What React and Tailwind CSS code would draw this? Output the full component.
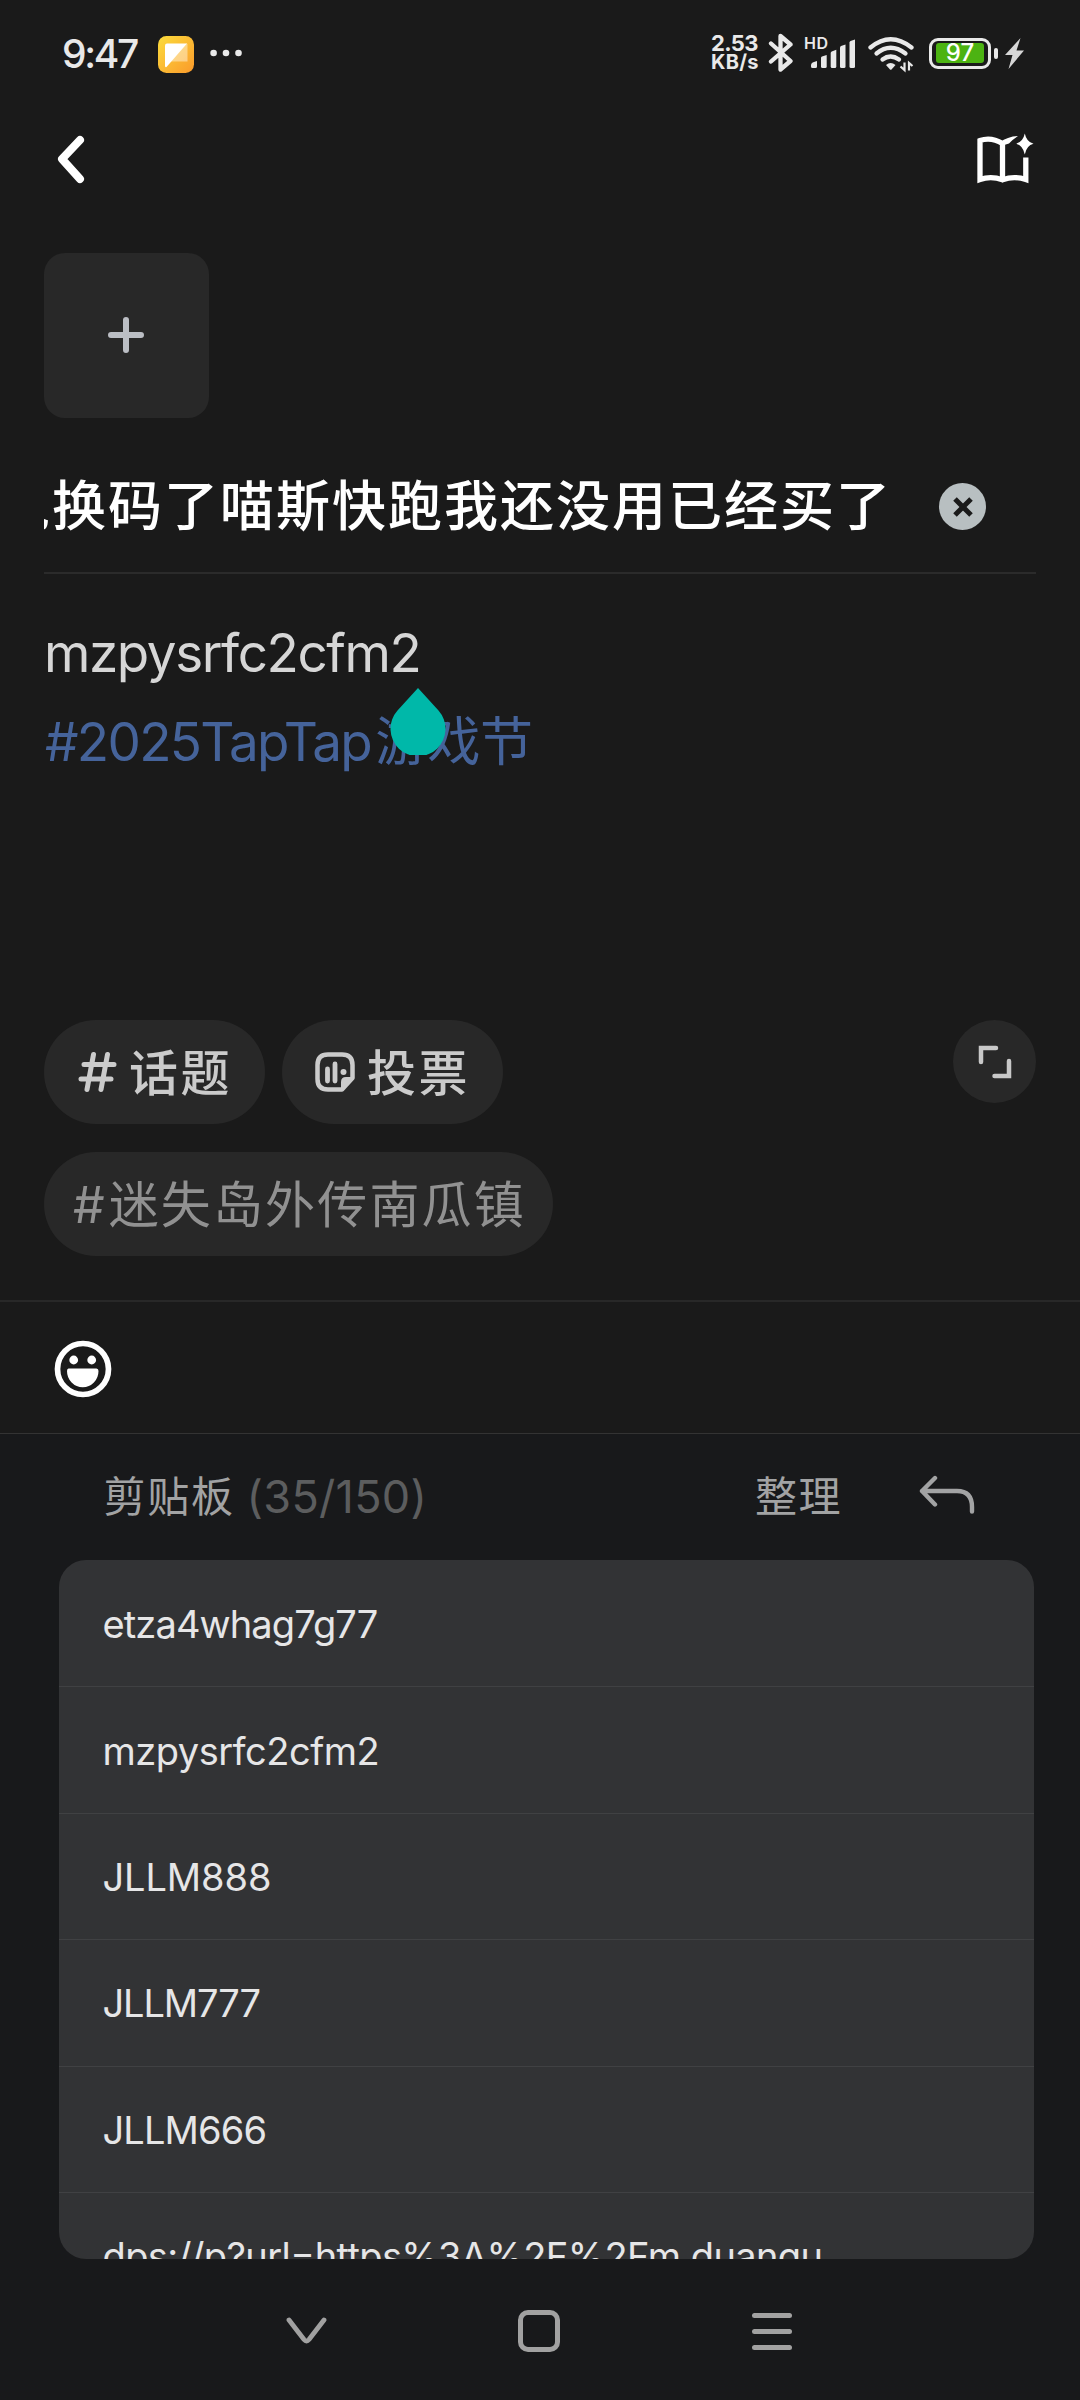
import React from "react";

const clips = [
  { text: "etza4whag7g77", cls: "tracking-[-0.880px]" },
  { text: "mzpysrfc2cfm2", cls: "tracking-[-0.500px]" },
  { text: "JLLM888", cls: "tracking-[-0.1px]" },
  { text: "JLLM777", cls: "tracking-[-1.100px]" },
  { text: "JLLM666", cls: "tracking-[-0.85px]" },
  { text: "dps://p?url=https%3A%2F%2Fm.duangu", cls: "tracking-[-0.6px]" },
];

function StatusBar() {
  return (
    <div className="flex h-[106px] items-center pr-[55px] pl-[62px] text-[#e9e9e9]">
      <span className="mt-px w-[96px] text-[39px] leading-[40px] font-medium tracking-[-2.300px]">9:47</span>
      <svg width="36" height="37" viewBox="0 0 36 37" className="mt-[2px]">
        <defs>
          <linearGradient id="note" x1="0" y1="0" x2="1" y2="1">
            <stop offset="0" stopColor="#fbdc3c" />
            <stop offset="1" stopColor="#fb9a2b" />
          </linearGradient>
        </defs>
        <rect width="36" height="37" rx="8.5" fill="url(#note)" />
        <path d="M28 7.5 H28.5 Q29.5 7.5 29.5 8.5 V25.500 H12.500 Z" fill="#fff" fillOpacity="0.42" />
        <path d="M9 7.500 H29 L8.500 31 Q7 31.500 7 30 V9.500 Q7 7.500 9 7.500 Z" fill="#fff" />
      </svg>
      <svg width="34" height="8" viewBox="0 0 34 8" className="ml-[16px]" fill="#e9e9e9">
        <circle cx="3.600" cy="4" r="3.300" />
        <circle cx="16" cy="4" r="3.300" />
        <circle cx="28.500" cy="4" r="3.300" />
      </svg>
      <div className="ml-auto flex h-full items-center">
        <div className="flex w-[58px] flex-col font-bold">
          <span className="text-[22px] leading-[19px] tracking-[-0.600px]">2.53</span>
          <span className="text-[20px] leading-[19px] tracking-[0.300px]">KB/s</span>
        </div>
        <svg width="26" height="40" viewBox="768 33 26 40" className="-ml-px" fill="none" stroke="#e9e9e9" strokeWidth="4.300" strokeLinejoin="round" strokeLinecap="round">
          <path d="M771 43.500 L790.500 61 L780.500 69.500 V36 L790.500 44.500 L771 61.500" />
        </svg>
        <svg width="54" height="40" viewBox="804 33 54 40" className="ml-[10px]" fill="#e9e9e9">
          <text x="804" y="49" fontSize="16" fontWeight="600" letterSpacing="0.500">HD</text>
          <path d="M811 65.500 Q811 62.500 814 62 L817 61 V66.500 Q817 68 815.500 68 H812.500 Q811 68 811 66.500 Z" />
          <path d="M821 58 Q821 57 822 56.600 L826.700 55 V66.500 Q826.700 68 825.200 68 H822.500 Q821 68 821 66.500 Z" />
          <path d="M830.700 53 Q830.700 52 831.700 51.500 L836.300 49.800 V66.500 Q836.300 68 834.800 68 H832.200 Q830.700 68 830.700 66.500 Z" />
          <path d="M840 47.500 Q840 46.500 841 46 L845.500 44.500 V66.500 Q845.500 68 844 68 H841.500 Q840 68 840 66.500 Z" />
          <path d="M849.500 42.500 Q849.500 41.500 850.500 41 L855 39.500 V66.500 Q855 68 853.500 68 H851 Q849.500 68 849.500 66.500 Z" />
        </svg>
        <svg width="48" height="40" viewBox="867 33 48 40" className="ml-[9px]" fill="none" stroke="#e9e9e9" strokeWidth="4.300" strokeLinecap="round">
          <path d="M870.500 47.500 Q890.500 31 911.500 47.500" />
          <path d="M876.500 53.500 Q890.500 42 905.500 53.500" />
          <path d="M882.500 59.500 Q890.500 53.500 899 59.500" />
          <path d="M886 65 Q890.500 61 895.500 65 L891.500 69.500 Q890.700 70 890 69.500 Z" fill="#e9e9e9" stroke="none" />
          <path d="M904.500 62.500 V70 L900.500 66.500 M909 70.500 V63 L912.500 66" strokeWidth="2.200" strokeLinecap="butt" />
        </svg>
        <div className="ml-[14px] flex h-[31px] w-[62px] items-center justify-center rounded-[9px] border-[3.500px] border-[#e9e9e9]">
          <div className="flex h-[20px] w-[48px] items-center justify-center rounded-[3px] bg-[#4cb312]">
            <span className="text-[24px] leading-[20px] font-medium text-white">97</span>
          </div>
        </div>
        <div className="ml-[3px] h-[11px] w-[4px] rounded-[2px] bg-[#e9e9e9]" />
        <svg width="20" height="31" viewBox="0 0 20 31" className="ml-[7px]" fill="#d6d6d6">
          <path d="M15.500 0 L0 17 H7.500 L3.500 31 L19 12.500 H11.500 Z" />
        </svg>
      </div>
    </div>
  );
}

function TopNav() {
  return (
    <div className="flex h-[107px] items-center justify-between pr-[46px] pb-[2px] pl-[58px]">
      <svg width="28" height="50" viewBox="57 134.500 28 50" className="-ml-px" fill="none" stroke="#fff" strokeWidth="8" strokeLinecap="round" strokeLinejoin="round">
        <path d="M80 140.500 L62 159.500 L80 179.500" />
      </svg>
      <svg width="58" height="52" viewBox="976 133 58 52" fill="none" stroke="#fff" strokeWidth="5.300" strokeLinejoin="miter">
        <path d="M1002.500 143.500 Q991 136.500 980 140.500 V179.500 Q991 175.500 1002.500 179.800 Q1014 175.500 1025.800 179.500 V157.500" />
        <path d="M1002.500 142 V180" />
        <path d="M1000 142.500 Q1007 136.500 1018 136 Q1012 140 1009 143.500 L1002.500 145.500 Z" fill="#fff" stroke="none" />
        <path d="M1024.800 133.500 Q1026.500 142 1033.500 143.800 Q1026.500 145.500 1024.800 154.500 Q1023 145.500 1016 143.800 Q1023 142 1024.800 133.500 Z" fill="#fff" stroke="none" />
      </svg>
    </div>
  );
}

function Editor() {
  return (
    <div className="px-[44px]">
      <button className="mt-[40px] flex h-[165px] w-[165px] items-center justify-center rounded-[21px] bg-[#282828] pr-[2px] pb-[2px]">
        <svg width="36" height="36" viewBox="0 0 36 36" fill="none" stroke="#bbbec4" strokeWidth="6" strokeLinecap="round">
          <path d="M3 18 H33 M18 3 V33" />
        </svg>
      </button>
      <div className="mt-[21px] flex h-[133px] items-center">
        <div className="flex w-[848px] justify-end overflow-hidden pt-[3px]">
          <span className="text-[54px] leading-[80px] font-medium tracking-[2px] whitespace-nowrap text-white">兑换码了喵斯快跑我还没用已经买了</span>
        </div>
        <div className="mt-[2px] ml-[47px] flex h-[47px] w-[47px] items-center justify-center rounded-full bg-[#b8bfc1]">
          <svg width="20" height="20" viewBox="0 0 20 20" stroke="#1a1a1a" strokeWidth="5">
            <path d="M2 2 L18 18 M18 2 L2 18" />
          </svg>
        </div>
      </div>
      <div className="h-[2px] bg-[#2b2b2b]" />
      <div className="mt-[35px] h-[411px] text-[53px] leading-[89px] whitespace-nowrap">
        <div className="tracking-[-1.430px] text-[#d6d6d6]">mzpysrfc2cfm2</div>
        <div className="relative text-[#45639a]">
          <span className="ml-px tracking-[-1.700px]">#2025TapTap</span>
          <span className="ml-[4px] tracking-[-0.500px]">游戏节</span>
          <svg width="56" height="67" viewBox="0 0 56 67" className="absolute -top-[10px] left-[346px]">
            <path d="M28 0 L48.500 22.500 A27.500 27.500 0 1 1 7.500 22.500 Z" fill="#00b8a9" />
          </svg>
        </div>
      </div>
    </div>
  );
}

function Topics() {
  return (
    <div className="flex h-[280px] items-start justify-between px-[44px]">
      <div className="flex flex-col items-start gap-[28px]">
        <div className="flex gap-[17px] text-[49px] leading-[60px] font-medium tracking-[2.500px] text-[#cbcbcb]">
          <div className="flex h-[104px] w-[221px] items-center rounded-full bg-[#282828] pl-[34px]">
            <svg width="39" height="42" viewBox="0 0 39 42" fill="none" stroke="#cbcbcb" strokeWidth="5" strokeLinecap="round">
              <path d="M15.500 3.500 L9 38.500 M29.500 3.500 L23 38.500 M6 13.500 H36 M3 28 H33" />
            </svg>
            <span className="mt-[3px] ml-[12px]">话题</span>
          </div>
          <div className="flex h-[104px] w-[221px] items-center rounded-full bg-[#282828] pl-[32px]">
            <svg width="42" height="42" viewBox="0 0 42 42" fill="none" stroke="#cbcbcb" strokeWidth="4.500" strokeLinecap="round" strokeLinejoin="round">
              <path d="M28 38.500 H14 Q3.500 38.500 3.500 28 V14 Q3.500 3.500 14 3.500 H28 Q38.500 3.500 38.500 14 V27 Z" />
              <path d="M13.500 18 V30 M21 13 V30" strokeWidth="4.800" />
              <path d="M28 39 V31 Q28 27 32 27 H39 Z" fill="#cbcbcb" strokeWidth="2" />
              <circle cx="29.500" cy="21" r="3" fill="#cbcbcb" stroke="none" />
            </svg>
            <span className="mt-[3px] ml-[11px]">投票</span>
          </div>
        </div>
        <div className="flex h-[104px] w-[509px] items-center rounded-full bg-[#282828] pt-[2px] pl-[29px] text-[50px] leading-[60px] whitespace-nowrap text-[#919191]">
          <span className="tracking-[4px]">#</span>
          <span className="tracking-[2.150px]">迷失岛外传南瓜镇</span>
        </div>
      </div>
      <button className="flex h-[83px] w-[83px] items-center justify-center rounded-full bg-[#282828]">
        <svg width="36" height="36" viewBox="0 0 36 36" fill="none" stroke="#c8c8c8" strokeWidth="4.500" strokeLinecap="round">
          <path d="M4 18 V4 H19 M17.500 32 H32 V17" />
        </svg>
      </button>
    </div>
  );
}

function EmojiBar() {
  return (
    <div className="flex h-[134px] items-center border-t-2 border-b border-t-[#282828] border-b-[#333333] pl-[53.500px]">
      <svg width="58" height="58" viewBox="0 0 58 58" className="mt-[2px]" fill="#fff">
        <circle cx="29" cy="29" r="25.500" fill="none" stroke="#fff" strokeWidth="5.700" />
        <circle cx="19.700" cy="20" r="4.400" />
        <circle cx="37.700" cy="20" r="4.400" />
        <path d="M14.500 28.500 H42.500 Q44.500 28.500 44.500 31 A15.500 16 0 0 1 13 31 Q13 28.500 14.500 28.500 Z" />
      </svg>
    </div>
  );
}

function Clipboard() {
  return (
    <div className="h-[966px] bg-[#18191b]">
      <div className="flex h-[126px] items-center pr-[105px] pl-[103.500px] text-[42px] leading-[60px] text-[#a2a3a4]">
        <span className="tracking-[1.700px]">剪贴板</span>
        <span className="ml-[12px] text-[45px] tracking-[0.300px] text-[#5c5d5e]">(35/150)</span>
        <span className="mr-[77px] ml-auto tracking-[1.500px]">整理</span>
        <svg width="56" height="42" viewBox="919 1473 56 42" className="-mt-[6px]" fill="none" stroke="#a2a3a4" strokeWidth="4.400" strokeLinecap="round" strokeLinejoin="round">
          <path d="M935 1478 L922 1491 L935 1504.500 M922 1491 H957 Q972 1491 972 1507 V1511.500" />
        </svg>
      </div>
      <div className="mr-[46px] ml-[59px] h-[699px] overflow-hidden rounded-[27px] bg-[#323335] pt-px">
        {clips.map((c) => (
          <div key={c.text} className="flex h-[126.400px] items-center border-b border-[#404143] pt-px pl-[43.500px] text-[38px] leading-[50px] whitespace-nowrap text-[#e6e6e7]">
            <span className={c.cls}>{c.text}</span>
          </div>
        ))}
      </div>
      <div className="flex h-[141px] items-center pt-[3px] pl-[286px]">
        <svg width="41" height="30" viewBox="0 0 41 30" fill="none" stroke="#a1a1a1" strokeWidth="4.800" strokeLinecap="round" strokeLinejoin="round">
          <path d="M3 4 L18 23.500 Q20.500 26.500 23 23.500 L38 4" />
        </svg>
        <div className="ml-[191px] h-[42px] w-[42px] rounded-[10px] border-[5px] border-[#a1a1a1]" />
        <div className="ml-[192px] flex w-[40px] flex-col gap-[11px]">
          <div className="h-[5px] rounded-full bg-[#a1a1a1]" />
          <div className="h-[5px] rounded-full bg-[#a1a1a1]" />
          <div className="h-[5px] rounded-full bg-[#a1a1a1]" />
        </div>
      </div>
    </div>
  );
}

export default function App() {
  return (
    <div className="h-[2400px] w-[1080px] overflow-hidden bg-[#1a1a1a] font-['Inter','Noto_Sans_CJK_SC',sans-serif]">
      <StatusBar />
      <TopNav />
      <Editor />
      <Topics />
      <EmojiBar />
      <Clipboard />
    </div>
  );
}
